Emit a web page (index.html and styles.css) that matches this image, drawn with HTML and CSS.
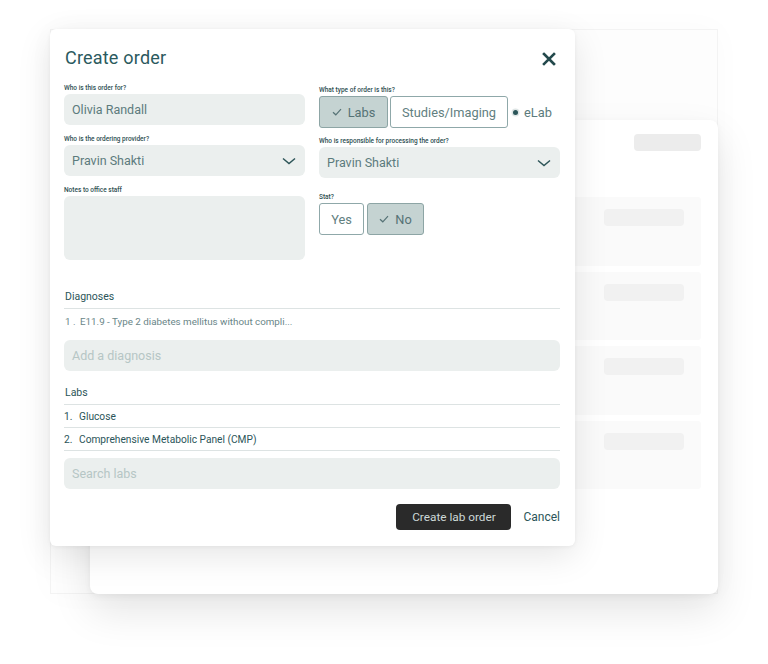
FILE: index.html
```html
<!DOCTYPE html>
<html lang="en">
<head>
<meta charset="utf-8">
<title>Create order</title>
<link rel="stylesheet" href="styles.css">
</head>
<body>
<div class="stage">
  <div class="back-window"></div>
  <div class="mid-card">
    <div class="mid-top"><span class="ghost-pill"></span></div>
    <div class="mid-rows">
      <div class="mid-row"><span class="row-pill"></span></div>
      <div class="mid-row"><span class="row-pill"></span></div>
      <div class="mid-row"><span class="row-pill"></span></div>
      <div class="mid-row"><span class="row-pill"></span></div>
    </div>
  </div>
  <div class="modal">
    <div class="modal-head">
      <h1 class="title">Create order</h1>
      <svg class="close" width="14" height="14" viewBox="0 0 14 14"><path d="M2 2L12 12M12 2L2 12" stroke="#23494c" stroke-width="2.6" stroke-linecap="square" fill="none"/></svg>
    </div>
    <div class="cols">
      <div class="col">
        <div class="field">
          <div class="label">Who is this order for?</div>
          <div class="input"><span class="val">Olivia Randall</span></div>
        </div>
        <div class="field">
          <div class="label">Who is the ordering provider?</div>
          <div class="input select"><span class="val">Pravin Shakti</span>
            <svg class="chev" width="14" height="8" viewBox="0 0 14 8"><path d="M1 1.5L7 6.5L13 1.5" stroke="#2d5558" stroke-width="1.5" fill="none"/></svg>
          </div>
        </div>
        <div class="field">
          <div class="label">Notes to office staff</div>
          <div class="input textarea"></div>
        </div>
      </div>
      <div class="col col-right">
        <div class="field">
          <div class="label">What type of order is this?</div>
          <div class="toggles">
            <div class="tog on t-labs"><svg class="tick" width="10" height="8" viewBox="0 0 10 8"><path d="M1 4.2L3.8 6.8L9 1.2" stroke="#557275" stroke-width="1.2" fill="none"/></svg>Labs</div>
            <div class="tog t-studies">Studies/Imaging</div>
            <div class="elab"><span class="dot"></span>eLab</div>
          </div>
        </div>
        <div class="field f-proc">
          <div class="label">Who is responsible for processing the order?</div>
          <div class="input select"><span class="val">Pravin Shakti</span>
            <svg class="chev" width="14" height="8" viewBox="0 0 14 8"><path d="M1 1.5L7 6.5L13 1.5" stroke="#2d5558" stroke-width="1.5" fill="none"/></svg>
          </div>
        </div>
        <div class="field f-stat">
          <div class="label">Stat?</div>
          <div class="toggles">
            <div class="tog t-yes">Yes</div>
            <div class="tog on t-no"><svg class="tick" width="10" height="8" viewBox="0 0 10 8"><path d="M1 4.2L3.8 6.8L9 1.2" stroke="#557275" stroke-width="1.2" fill="none"/></svg>No</div>
          </div>
        </div>
      </div>
    </div>

    <div class="section diag">
      <div class="sec-head">Diagnoses</div>
      <div class="diag-item"><span class="num">1 .</span>E11.9 - Type 2 diabetes mellitus without compli...</div>
      <div class="input wide"><span class="ph">Add a diagnosis</span></div>
    </div>

    <div class="section labs">
      <div class="sec-head">Labs</div>
      <div class="lab-item"><span class="num">1.</span>Glucose</div>
      <div class="lab-item"><span class="num">2.</span>Comprehensive Metabolic Panel (CMP)</div>
      <div class="input wide search"><span class="ph">Search labs</span></div>
    </div>

    <div class="actions">
      <button class="btn-primary">Create lab order</button>
      <button class="btn-link">Cancel</button>
    </div>
  </div>
</div>
</body>
</html>
```
FILE: styles.css
```css
* { box-sizing: border-box; }
html, body { margin: 0; padding: 0; background: #ffffff; }
body {
  font-family: "Roboto", "Liberation Sans", sans-serif;
  color: #2b5559;
  width: 768px;
  height: 664px;
  overflow: hidden;
}
.stage { position: relative; width: 768px; height: 664px; }

.back-window {
  position: absolute;
  left: 50px; top: 29px;
  width: 668px; height: 565px;
  background: #fdfdfd;
  border: 1px solid #f3f3f3;
  box-shadow: 0 0 30px rgba(0,0,0,0.025);
}

.mid-card {
  position: absolute;
  left: 90px; top: 120px;
  width: 628px; height: 474px;
  background: #ffffff;
  border-radius: 8px;
  box-shadow: 0 18px 40px rgba(0,0,0,0.10), 0 2px 6px rgba(0,0,0,0.05);
  padding: 14px 17px 0 20px;
  display: flex;
  flex-direction: column;
}
.mid-top { display: flex; justify-content: flex-end; height: 17px; }
.ghost-pill { width: 67px; height: 17px; border-radius: 4px; background: #ececec; }
.mid-rows { margin-top: 46px; display: flex; flex-direction: column; gap: 6px; }
.mid-row {
  height: 68.5px;
  background: #fafafa;
  border-radius: 3px;
  display: flex;
  justify-content: flex-end;
  padding: 12px 17px 0 0;
}
.row-pill { width: 80px; height: 17px; border-radius: 4px; background: #f1f1f1; }

.modal {
  position: absolute;
  left: 50px; top: 29px;
  width: 525px;
  background: #ffffff;
  border-radius: 6px;
  box-shadow: 0 10px 34px rgba(0,0,0,0.10), 0 1px 4px rgba(0,0,0,0.05);
  padding: 16px 15px 16px 14px;
}
.modal-head { display: flex; justify-content: space-between; align-items: center; height: 24px; margin-bottom: 14px; }
.title { margin: 0; font-size: 18px; font-weight: 400; line-height: 24px; color: #2b5a5e; padding-left: 1px; letter-spacing: 0.2px; margin-top: 2px; }
.close { margin-right: 4px; margin-top: 3px; }

.cols { display: grid; grid-template-columns: 241px 241px; column-gap: 14px; }
.col { display: flex; flex-direction: column; }
.col-right { padding-top: 2px; }
.field { display: flex; flex-direction: column; }
.field + .field { margin-top: 9px; }
.field.f-proc { margin-top: 8px; }
.field.f-stat { margin-top: 14px; }
.label { font-size: 6.5px; line-height: 10px; height: 10px; margin-bottom: 1px; color: #2e4f52; font-weight: 500; }

.input {
  height: 31px;
  background: #ebefee;
  border-radius: 6px;
  display: flex;
  align-items: center;
  padding: 0 8px;
}
.val { font-size: 12.5px; color: #5c7b7d; font-weight: 400; letter-spacing: 0; }
.ph { font-size: 12.5px; color: #b6c6c5; }
.select { justify-content: space-between; padding-right: 9px; }
.textarea { height: 64px; }

.toggles { display: flex; align-items: center; height: 32px; }
.tog {
  height: 32px;
  border: 1px solid #8fa8a9;
  border-radius: 3px;
  background: #ffffff;
  display: flex;
  align-items: center;
  justify-content: center;
  font-size: 12.8px;
  color: #62807f;
  gap: 6px;
}
.tog.on { background: #c5d3d2; border-color: #8da5a5; color: #557275; }
.t-labs { width: 69px; }
.t-studies { width: 118px; margin-left: 2px; }
.elab { display: flex; align-items: center; font-size: 12.8px; color: #5c7b7d; margin-left: 5px; }
.dot { width: 5px; height: 5px; border-radius: 50%; background: #2b5559; margin-right: 6px; box-shadow: 0 0 0 1.5px #dfe6e6; }
.t-yes { width: 45px; }
.t-no { width: 57px; margin-left: 3px; }

.section { display: flex; flex-direction: column; }
.diag { margin-top: 30px; }
.sec-head {
  font-size: 10.5px;
  line-height: 14px;
  padding-bottom: 4px;
  border-bottom: 1px solid #dde3e3;
  color: #2b5559;
  padding-left: 1px;
}
.diag-item { height: 24px; display: flex; align-items: center; font-size: 9.8px; color: #6a8688; padding-left: 1px; }
.diag-item .num { width: 15px; }
.diag .input { margin-top: 7px; }
.labs { margin-top: 15px; }
.lab-item {
  height: 23px;
  display: flex;
  align-items: center;
  font-size: 10.2px;
  color: #2b5559;
  border-bottom: 1px solid #dde3e3;
  padding-top: 1px;
}
.lab-item .num { width: 15px; }
.search { margin-top: 7px; }

.actions { display: flex; justify-content: flex-end; align-items: center; margin-top: 15px; gap: 12px; }
.btn-primary {
  height: 26px;
  width: 115px;
  background: #2a2a2a;
  color: #cdd8d7;
  border: none;
  border-radius: 4px;
  font-family: inherit;
  font-size: 11.8px;
  padding: 0;
}
.btn-link {
  background: none;
  border: none;
  padding: 0;
  font-family: inherit;
  font-size: 12px;
  color: #2b5559;
}
```
